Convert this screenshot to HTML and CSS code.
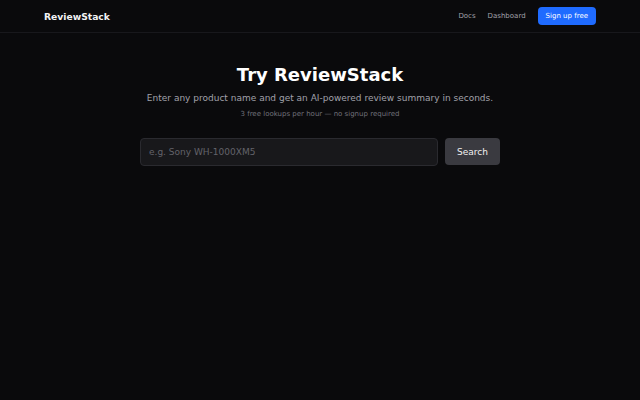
FILE: index.html
```html
<!DOCTYPE html>
<html lang="en">
<head>
<meta charset="utf-8">
<title>ReviewStack</title>
<link rel="stylesheet" href="styles.css">
</head>
<body>
<header class="topbar">
  <div class="topbar-inner">
    <a class="logo" href="#">ReviewStack</a>
    <nav class="nav">
      <a class="nav-link" href="#">Docs</a>
      <a class="nav-link" href="#">Dashboard</a>
      <a class="btn-primary" href="#">Sign up free</a>
    </nav>
  </div>
</header>
<main class="hero">
  <h1 class="title">Try ReviewStack</h1>
  <p class="subtitle">Enter any product name and get an AI-powered review summary in seconds.</p>
  <p class="note">3 free lookups per hour — no signup required</p>
  <form class="search">
    <input class="search-input" type="text" placeholder="e.g. Sony WH-1000XM5">
    <button class="search-btn" type="button">Search</button>
  </form>
</main>
</body>
</html>
```
FILE: styles.css
```css
* { box-sizing: border-box; }
html, body {
  margin: 0;
  background: #0a0a0c;
  color: #e8e8ea;
  font-family: "DejaVu Sans", sans-serif;
}
body { min-height: 400px; }
a { text-decoration: none; }
.topbar {
  border-bottom: 1px solid #18181c;
}
.topbar-inner {
  height: 32px;
  padding: 0 44px;
  display: flex;
  align-items: center;
  justify-content: space-between;
}
.logo {
  color: #f2f2f4;
  font-weight: bold;
  font-size: 9.2px;
}
.nav {
  display: flex;
  align-items: center;
  gap: 12px;
}
.nav-link {
  color: #a1a1aa;
  font-size: 7px;
}
.btn-primary {
  background: #1f6bff;
  color: #ffffff;
  font-size: 7px;
  height: 18px;
  padding: 0 8px;
  border-radius: 4px;
  display: flex;
  align-items: center;
}
.hero {
  display: flex;
  flex-direction: column;
  align-items: center;
  padding-top: 31px;
}
.title {
  margin: 0;
  font-size: 18px;
  font-weight: bold;
  color: #ffffff;
  line-height: 22px;
}
.subtitle {
  margin: 5px 0 0;
  font-size: 9px;
  color: #a1a1aa;
  line-height: 14px;
}
.note {
  margin: 4px 0 0;
  font-size: 7px;
  color: #71717a;
  line-height: 10px;
}
.search {
  margin-top: 19px;
  display: flex;
  align-items: center;
  gap: 7px;
  width: 360px;
}
.search-input {
  flex: 1;
  height: 27.5px;
  background: #18181b;
  border: 1px solid #2a2a2f;
  border-radius: 4px;
  padding: 0 8px;
  color: #e4e4e7;
  font-family: "DejaVu Sans", sans-serif;
  font-size: 9px;
  outline: none;
}
.search-input::placeholder { color: #63636a; }
.search-btn {
  width: 55px;
  height: 27px;
  background: #3a3a40;
  border: none;
  border-radius: 4px;
  color: #f0f0f2;
  font-family: "DejaVu Sans", sans-serif;
  font-size: 9px;
}
```
